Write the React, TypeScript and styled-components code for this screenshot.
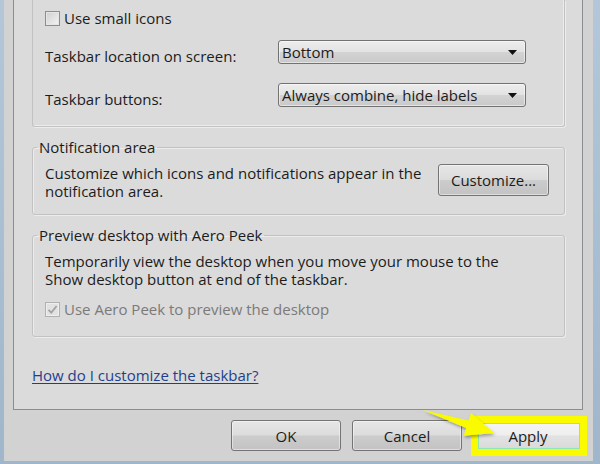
import React from 'react'
import styled, { createGlobalStyle } from 'styled-components'

const GlobalStyle = createGlobalStyle`
	html, body {
		margin: 0;
		padding: 0;
	}
	body {
		font-family: "Open Sans", "Liberation Sans", sans-serif;
		background: #a8bdd1;
	}
`

const Frame = styled.div`
	position: relative;
	width: 600px;
	height: 464px;
	overflow: hidden;
	background: linear-gradient(180deg, #b3c7d9, #9fb6cb);
	font-size: 15px;
	line-height: 18px;
	color: #1c1c1c;
`

const Dialog = styled.div`
	margin-left: 4px;
	width: 589px;
	height: 461px;
	background: #d2d2d2;
	display: flex;
	flex-direction: column;
`

const Panel = styled.div`
	box-sizing: border-box;
	margin-left: 9px;
	width: 570px;
	height: 410px;
	background: #dbdbdb;
	border: 1px solid #8b8e91;
	border-top: none;
	padding: 0 17px 0 18px;
	display: flex;
	flex-direction: column;
`

const TopGroup = styled.div`
	box-sizing: border-box;
	height: 127px;
	border: 1px solid #c2c2c2;
	border-top: none;
	border-radius: 0 0 3px 3px;
	box-shadow: inset -1px -1px 0 #ececec, 1px 1px 0 #ececec;
	padding: 9px 0 0 12px;
	display: flex;
	flex-direction: column;
`

const SettingRow = styled.div<{ $gap: number }>`
	display: flex;
	align-items: flex-start;
	margin-top: ${({ $gap }) => $gap}px;
`

const SettingLabel = styled.span`
	width: 233px;
	margin-top: 7px;
	white-space: nowrap;
`

const Select = styled.div`
	box-sizing: border-box;
	width: 248px;
	height: 24px;
	border: 1px solid #727272;
	border-radius: 3px;
	background: linear-gradient(180deg, #ededed 0%, #e3e3e3 48%, #d3d3d3 52%, #c9c9c9 100%);
	box-shadow: inset 0 0 0 1px rgba(255, 255, 255, 0.5);
	display: flex;
	align-items: center;
	justify-content: space-between;
	padding: 0 8px 0 3px;
	white-space: nowrap;
`

const CheckRow = styled.label<{ $disabled?: boolean; $gap?: number }>`
	display: flex;
	align-items: center;
	height: 18px;
	gap: 4px;
	margin-top: ${({ $gap }) => $gap || 0}px;
	color: ${({ $disabled }) => $disabled ? '#7a7a7a' : '#1c1c1c'};
	white-space: nowrap;
`

const Box = styled.span<{ $disabled?: boolean }>`
	box-sizing: border-box;
	width: 15px;
	height: 15px;
	border: 1px solid ${({ $disabled }) => $disabled ? '#b1b1b1' : '#8d8d8d'};
	background: ${({ $disabled }) => $disabled
		? '#e2e2e2'
		: 'linear-gradient(135deg, #cfcfcf, #f4f4f4)'};
	box-shadow: inset 0 0 0 1px ${({ $disabled }) => $disabled ? '#eeeeee' : '#e6e6e6'};
	display: flex;
	align-items: center;
	justify-content: center;
`

const Group = styled.fieldset<{ $gap: number }>`
	margin: ${({ $gap }) => $gap}px 0 0;
	padding: 0;
	min-width: 0;
	border: 1px solid #c2c2c2;
	border-radius: 3px;
	box-shadow: inset 1px 1px 0 #ececec, 1px 1px 0 #ececec;
`

const Legend = styled.legend`
	margin-left: 4px;
	padding: 0 2px;
	line-height: 18px;
	white-space: nowrap;
`

const GroupBody = styled.div<{ $bottom: number }>`
	padding: 8px 0 ${({ $bottom }) => $bottom}px 12px;
`

const NotifyRow = styled.div`
	display: flex;
	align-items: flex-start;
	justify-content: space-between;
	padding-right: 15px;
`

const Paragraph = styled.p`
	margin: 0;
	white-space: nowrap;
`

const HelpLink = styled.a`
	margin-top: 29px;
	align-self: flex-start;
	color: #1f3f8c;
	text-decoration: underline;
	text-underline-offset: 2px;
	cursor: pointer;
`

const ButtonBar = styled.div`
	display: flex;
	justify-content: flex-end;
	gap: 11px;
	margin-top: 10px;
	padding-right: 10px;
`

const Button = styled.button<{ $w?: number; $h?: number; $hot?: boolean }>`
	box-sizing: border-box;
	width: ${({ $w }) => $w || 110}px;
	height: ${({ $h }) => $h || 31}px;
	border: 1px solid #747474;
	border-radius: 3px;
	background: ${({ $hot }) => $hot
		? 'linear-gradient(180deg, #f6f6f6 0%, #eeeeee 48%, #e2e2e2 52%, #d9d9d9 100%)'
		: 'linear-gradient(180deg, #e6e6e6 0%, #dcdcdc 48%, #cccccc 52%, #c3c3c3 100%)'};
	box-shadow: inset 0 0 0 1px rgba(255, 255, 255, 0.45);
	font-family: "Open Sans", "Liberation Sans", sans-serif;
	font-size: 15px;
	line-height: 18px;
	color: #1c1c1c;
	padding: 0;
	cursor: pointer;
`

const HotWrap = styled.div`
	position: relative;
	display: flex;
`

const Highlight = styled.span`
	position: absolute;
	left: -2px;
	top: -4px;
	width: 116px;
	height: 40px;
	box-sizing: border-box;
	border: 7px solid #fbfb00;
	box-shadow: inset 0 0 0 1px #8fe6b4;
	pointer-events: none;
`

const Pointer = styled.svg`
	position: absolute;
	left: 418px;
	top: 405px;
	pointer-events: none;
`

const Check = () => (
	<svg width="11" height="11" viewBox="0 0 11 11">
		<path d="M1.5 5.8 L4.3 8.6 L9.6 2" fill="none" stroke="#a3a3a3" strokeWidth="1.8" />
	</svg>
)

const Caret = () => (
	<svg width="9" height="5" viewBox="0 0 9 5">
		<path d="M0 0 H9 L4.5 5 Z" fill="#111" />
	</svg>
)

export default function App() {
	return (
		<Frame>
			<GlobalStyle />
			<Dialog>
				<Panel>
					<TopGroup>
						<CheckRow>
							<Box />
							Use small icons
						</CheckRow>
						<SettingRow $gap={13}>
							<SettingLabel>Taskbar location on screen:</SettingLabel>
							<Select>
								<span>Bottom</span>
								<Caret />
							</Select>
						</SettingRow>
						<SettingRow $gap={18}>
							<SettingLabel>Taskbar buttons:</SettingLabel>
							<Select>
								<span>Always combine, hide labels</span>
								<Caret />
							</Select>
						</SettingRow>
					</TopGroup>

					<Group $gap={11}>
						<Legend>Notification area</Legend>
						<GroupBody $bottom={14}>
							<NotifyRow>
								<Paragraph>
									Customize which icons and notifications appear in the<br />
									notification area.
								</Paragraph>
								<Button $w={111} $h={32}>Customize...</Button>
							</NotifyRow>
						</GroupBody>
					</Group>

					<Group $gap={11}>
						<Legend>Preview desktop with Aero Peek</Legend>
						<GroupBody $bottom={18}>
							<Paragraph>
								Temporarily view the desktop when you move your mouse to the<br />
								Show desktop button at end of the taskbar.
							</Paragraph>
							<CheckRow $disabled $gap={12}>
								<Box $disabled>
									<Check />
								</Box>
								Use Aero Peek to preview the desktop
							</CheckRow>
						</GroupBody>
					</Group>

					<HelpLink>How do I customize the taskbar?</HelpLink>
				</Panel>

				<ButtonBar>
					<Button>OK</Button>
					<Button>Cancel</Button>
					<HotWrap>
						<Button $hot>Apply</Button>
						<Highlight />
					</HotWrap>
				</ButtonBar>
			</Dialog>

			<Pointer width="85" height="40" viewBox="0 0 85 40">
				<defs>
					<filter id="shade" x="-20%" y="-20%" width="140%" height="160%">
						<feDropShadow dx="1" dy="2" stdDeviation="1.5" floodColor="#000" floodOpacity="0.35" />
					</filter>
				</defs>
				<polygon
					points="5,5 50.6,15.5 53,8 76,28 45.7,30.7 48.2,23.1"
					fill="#fbfb00"
					filter="url(#shade)"
				/>
			</Pointer>
		</Frame>
	)
}
